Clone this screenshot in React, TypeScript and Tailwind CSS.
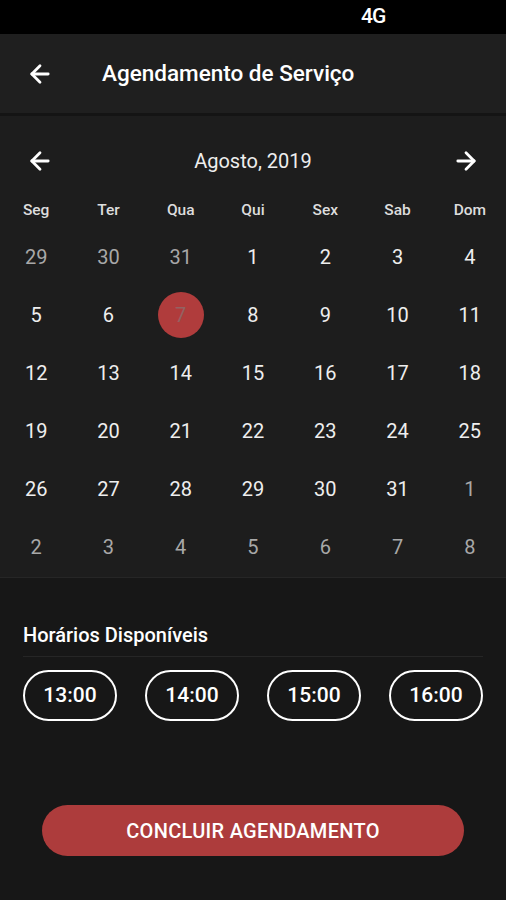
import { ArrowLeft, ArrowRight } from 'lucide-react'

const WEEKDAYS = ['Seg', 'Ter', 'Qua', 'Qui', 'Sex', 'Sab', 'Dom']

type Day = { n: number; muted?: boolean; selected?: boolean }

const days: Day[] = [
  { n: 29, muted: true },
  { n: 30, muted: true },
  { n: 31, muted: true },
  ...Array.from({ length: 31 }, (_, i) => ({ n: i + 1, selected: i + 1 === 7 })),
  ...Array.from({ length: 8 }, (_, i) => ({ n: i + 1, muted: true })),
]

const TIMES = ['13:00', '14:00', '15:00', '16:00']

export default function App() {
  return (
    <div
      className="flex h-[900px] w-[506px] flex-col overflow-hidden bg-[#171717] text-white"
      style={{ fontFamily: 'Roboto, "Noto Sans", sans-serif' }}
    >
      {/* status bar */}
      <div className="flex h-[34px] items-center bg-black pl-[361px]">
        <span className="text-[21px] font-medium tracking-[-1px]">4G</span>
      </div>

      {/* toolbar */}
      <div className="flex h-[79px] items-center bg-[#1f1f1f] pl-[26px]">
        <ArrowLeft size={28} strokeWidth={2.4} />
        <span className="ml-[48px] text-[22.5px] font-medium">Agendamento de Serviço</span>
      </div>
      <div className="h-[3px] bg-[#141414]" />

      {/* calendar */}
      <div className="bg-[#1d1d1d] pb-px pt-[29px]">
        <div className="flex h-[32px] items-center justify-between px-[26px]">
          <ArrowLeft size={28} strokeWidth={2.4} />
          <span className="text-[20px] text-[#eeeeee]">Agosto, 2019</span>
          <ArrowRight size={28} strokeWidth={2.4} />
        </div>
        <div className="mt-[16px] grid grid-cols-7">
          {WEEKDAYS.map((w) => (
            <div key={w} className="flex h-[35px] items-center justify-center text-[15.5px] font-medium text-[#dddddd]">
              {w}
            </div>
          ))}
          {days.map((d, i) => (
            <div key={i} className="flex h-[58px] items-center justify-center">
              {d.selected ? (
                <div className="flex h-[46px] w-[46px] items-center justify-center rounded-full bg-[#b03c3c] text-[20px] text-[#946262]">
                  {d.n}
                </div>
              ) : (
                <span className={`text-[20px] ${d.muted ? 'text-[#a8a8a8]' : 'text-[#eeeeee]'}`}>{d.n}</span>
              )}
            </div>
          ))}
        </div>
      </div>
      <div className="h-px bg-[#262626]" />

      {/* times */}
      <div className="px-[23px] pt-[42px]">
        <div className="border-b border-[#262626] pb-[6px] text-[20px] font-medium">Horários Disponíveis</div>
        <div className="mt-[13px] flex justify-between">
          {TIMES.map((t) => (
            <div
              key={t}
              className="flex h-[51px] w-[94px] items-center justify-center rounded-full border-2 border-white text-[21px] font-medium"
            >
              {t}
            </div>
          ))}
        </div>
      </div>

      <div className="mt-[84px] flex justify-center">
        <button className="flex h-[51px] w-[422px] items-center justify-center rounded-full bg-[#ad3c3c] text-[20px] font-medium tracking-[0.3px] text-white">
          CONCLUIR AGENDAMENTO
        </button>
      </div>
    </div>
  )
}
